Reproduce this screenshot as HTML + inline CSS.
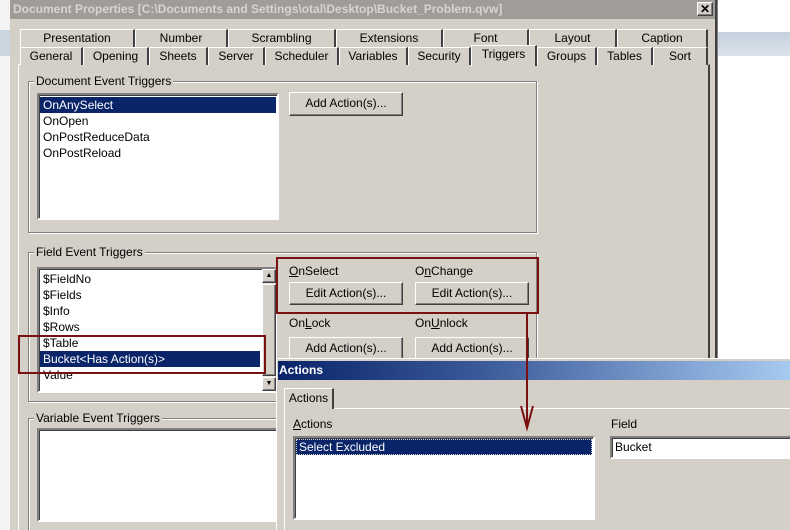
<!DOCTYPE html>
<html style="width:790px;height:530px;overflow:hidden"><head><style>
*{box-sizing:border-box}
body{margin:0;width:790px;height:530px;overflow:hidden;position:relative;background:#fff;font-family:"Liberation Sans",sans-serif;font-size:11px;color:#000}
.a{position:absolute}
.tab{position:absolute;background:#d4d0c8;border-top:1px solid #fff;border-left:1px solid #fff;border-right:2px solid #404040;text-align:center;line-height:16px;height:18px;font-size:12px}
.btn{position:absolute;background:#d4d0c8;border:1px solid;border-color:#fff #404040 #404040 #fff;box-shadow:inset -1px -1px #808080;text-align:center;font-size:12px;line-height:20px}
.lb{position:absolute;background:#fff;border:2px solid;border-color:#808080 #fff #fff #808080;box-shadow:inset 1px 1px #404040;overflow:hidden}
.grp{position:absolute;border:1px solid #808080;box-shadow:1px 1px #fff,inset 1px 1px #fff}
.gl{position:absolute;background:#d4d0c8;padding:0 2px;font-size:12px;line-height:13px}
.it{font-size:12px;line-height:16px;padding-left:3px;height:16px}
.sel{background:#0a246a;color:#fff}
.red{position:absolute;border:2px solid #7a1010}
</style></head><body>
<div class="a" style="left:0;top:0;width:12px;height:530px;background:#f4f4f4"></div>
<div class="a" style="left:0;top:30px;width:12px;height:26px;background:#c9d5df"></div>
<div class="a" style="left:717px;top:0;width:73px;height:530px;background:#fff;border-left:1px solid #808080"></div>
<div class="a" style="left:718px;top:32px;width:72px;height:24px;background:linear-gradient(#c4d1dd,#dbe3ea)"></div>
<div class="a" style="left:10px;top:0;width:707px;height:530px;background:#d4d0c8;border-right:2px solid #404040"></div>
<div class="a" style="left:10px;top:0;width:705px;height:19px;background:#a09c98;color:#d8d4d0;font-weight:bold;font-size:12px;line-height:19px;padding-left:3px">Document Properties [C:\Documents and Settings\otal\Desktop\Bucket_Problem.qvw]</div>
<div class="btn" style="left:697px;top:2px;width:16px;height:14px;line-height:12px;font-weight:bold;font-size:12px">✕</div>
<div class="a" style="left:18px;top:64px;width:692px;height:466px;border-left:1px solid #fff;border-top:1px solid #fff;border-right:2px solid #404040"></div>
<div class="tab" style="left:20px;top:29px;width:115px">Presentation</div>
<div class="tab" style="left:135px;top:29px;width:93px">Number</div>
<div class="tab" style="left:228px;top:29px;width:108px">Scrambling</div>
<div class="tab" style="left:336px;top:29px;width:107px">Extensions</div>
<div class="tab" style="left:443px;top:29px;width:86px">Font</div>
<div class="tab" style="left:529px;top:29px;width:88px">Layout</div>
<div class="tab" style="left:617px;top:29px;width:91px">Caption</div>
<div class="tab" style="left:20px;top:47px;width:63px">General</div>
<div class="tab" style="left:83px;top:47px;width:66px">Opening</div>
<div class="tab" style="left:149px;top:47px;width:59px">Sheets</div>
<div class="tab" style="left:208px;top:47px;width:57px">Server</div>
<div class="tab" style="left:265px;top:47px;width:74px">Scheduler</div>
<div class="tab" style="left:339px;top:47px;width:69px">Variables</div>
<div class="tab" style="left:408px;top:47px;width:63px">Security</div>
<div class="tab" style="left:471px;top:45px;width:66px;height:21px;z-index:2">Triggers</div>
<div class="tab" style="left:537px;top:47px;width:60px">Groups</div>
<div class="tab" style="left:597px;top:47px;width:56px">Tables</div>
<div class="tab" style="left:653px;top:47px;width:55px">Sort</div>
<div class="grp" style="left:28px;top:81px;width:509px;height:152px"></div>
<div class="gl" style="left:34px;top:75px">Document Event Triggers</div>
<div class="lb" style="left:37px;top:93px;width:242px;height:127px;padding:2px 1px">
<div class="it sel">OnAnySelect</div><div class="it">OnOpen</div><div class="it">OnPostReduceData</div><div class="it">OnPostReload</div></div>
<div class="btn" style="left:289px;top:92px;width:114px;height:24px">Add Action(s)...</div>
<div class="grp" style="left:28px;top:252px;width:509px;height:150px"></div>
<div class="gl" style="left:34px;top:246px">Field Event Triggers</div>
<div class="lb" style="left:37px;top:267px;width:240px;height:126px;padding:2px 1px">
<div class="it">$FieldNo</div><div class="it">$Fields</div><div class="it">$Info</div><div class="it">$Rows</div><div class="it">$Table</div><div class="it sel" style="margin-right:14px">Bucket&lt;Has Action(s)&gt;</div><div class="it">Value</div></div>
<div class="a" style="left:262px;top:269px;width:14px;height:122px;background:#e8e6e2"></div>
<div class="btn" style="left:262px;top:269px;width:14px;height:14px;font-size:7px;line-height:12px">▲</div>
<div class="btn" style="left:262px;top:284px;width:14px;height:92px"></div>
<div class="btn" style="left:262px;top:377px;width:14px;height:14px;font-size:7px;line-height:12px">▼</div>
<div class="a" style="left:289px;top:264px;font-size:12px"><u>O</u>nSelect</div>
<div class="a" style="left:415px;top:264px;font-size:12px">O<u>n</u>Change</div>
<div class="btn" style="left:289px;top:282px;width:114px;height:23px">Edit Action(s)...</div>
<div class="btn" style="left:415px;top:282px;width:114px;height:23px">Edit Action(s)...</div>
<div class="a" style="left:289px;top:316px;font-size:12px">On<u>L</u>ock</div>
<div class="a" style="left:415px;top:316px;font-size:12px">On<u>U</u>nlock</div>
<div class="btn" style="left:289px;top:337px;width:114px;height:23px">Add Action(s)...</div>
<div class="btn" style="left:415px;top:337px;width:114px;height:23px">Add Action(s)...</div>
<div class="grp" style="left:28px;top:418px;width:509px;height:112px;border-bottom:none"></div>
<div class="gl" style="left:34px;top:412px">Variable Event Triggers</div>
<div class="lb" style="left:37px;top:428px;width:242px;height:94px"></div>
<div class="red" style="left:18px;top:335px;width:248px;height:39px"></div>
<div class="red" style="left:276px;top:257px;width:263px;height:57px"></div>
<div class="a" style="left:276px;top:358px;width:514px;height:172px;background:#d4d0c8;border-top:1px solid #fff;border-left:1px solid #fff"></div>
<div class="a" style="left:278px;top:361px;width:512px;height:19px;background:linear-gradient(90deg,#0a246a,#3a5a9a 40%,#a6caf0);color:#fff;font-weight:bold;font-size:12px;line-height:19px;padding-left:1px">Actions</div>
<div class="a" style="left:284px;top:408px;width:506px;height:122px;border-top:1px solid #fff;border-left:1px solid #fff"></div>
<div class="tab" style="left:284px;top:388px;width:50px;height:21px;z-index:2;line-height:19px">Actions</div>
<div class="a" style="left:293px;top:417px;font-size:12px"><u>A</u>ctions</div>
<div class="a" style="left:611px;top:417px;font-size:12px">Field</div>
<div class="lb" style="left:293px;top:436px;width:302px;height:84px;padding:1px">
<div class="it sel" style="outline:1px dotted #ccc;outline-offset:-1px">Select Excluded</div></div>
<div class="lb" style="left:610px;top:436px;width:182px;height:23px;font-size:12px;line-height:19px;padding-left:3px">Bucket</div>
<svg class="a" style="left:0;top:0" width="790" height="530"><path d="M527 313V428M521 406L527 428L533 406" stroke="#7a1010" stroke-width="2" fill="none"/></svg>
</body></html>
